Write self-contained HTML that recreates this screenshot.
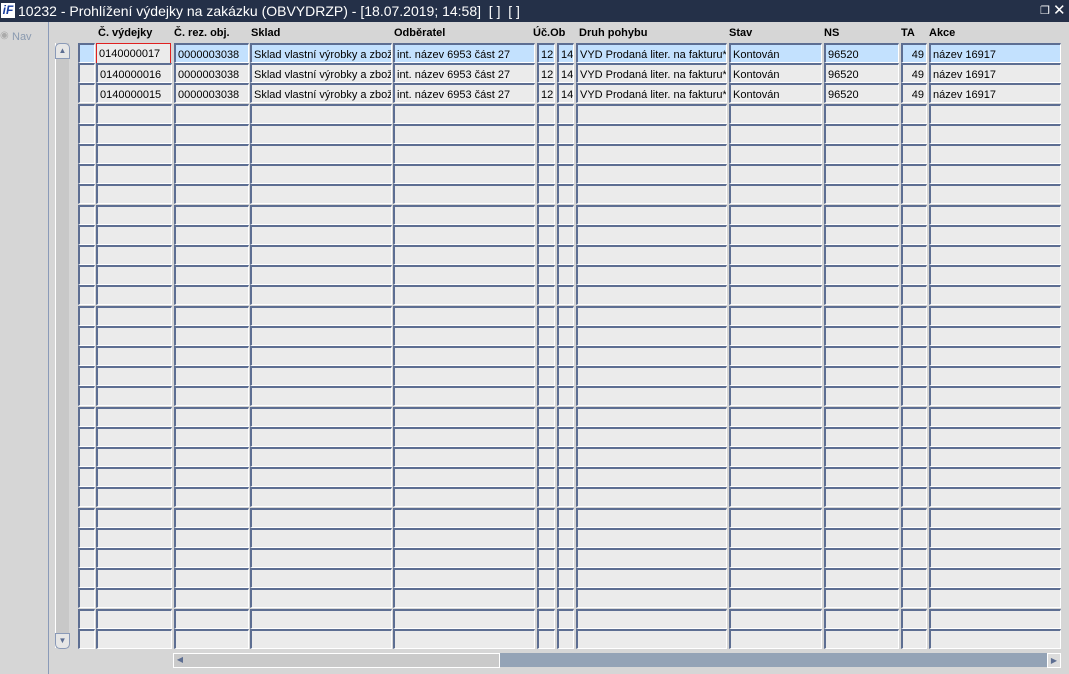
<!DOCTYPE html><html><head><meta charset="utf-8"><style>
body{margin:0;width:1069px;height:674px;overflow:hidden;background:#d6d6d6;font-family:"Liberation Sans",Arial,sans-serif;position:relative}
.t{position:absolute;left:0;top:0;width:1069px;height:22px;background:#243048;color:#fff;font-size:14px;line-height:22px}
.a{position:absolute}
.c{position:absolute;height:17px;background:#ebebeb;border-top:2px solid #5d6e92;border-left:2px solid #5d6e92;border-right:1px solid #fff;border-bottom:1px solid #fff;font-size:11px;line-height:20px;padding-left:2px;box-sizing:content-box;white-space:nowrap;overflow:hidden;color:#000}
.s{background:#c3e1fe}
.h{position:absolute;top:27px;font-size:11px;font-weight:bold}
</style></head><body>
<div class="t"><span style="position:absolute;left:1px;top:3px;width:14px;height:15px;background:#fff;color:#1a3fa0;font-weight:bold;font-style:italic;font-size:12px;line-height:15px;text-align:center">iF</span><span style="position:absolute;left:18px">10232 - Prohlížení výdejky na zakázku (OBVYDRZP) - [18.07.2019; 14:58]&nbsp; [ ]&nbsp; [ ]</span>
<span style="position:absolute;left:1040px;top:0;font-size:11px">&#x2750;</span><span style="position:absolute;left:1053px;top:0;font-size:15px">✕</span></div>
<div class="a" style="left:0;top:30px;width:13px;height:13px;font-size:10px;color:#aaa">◉</div>
<div class="a" style="left:12px;top:31px;font-size:11px;color:#8a9ab0">Nav</div>
<div class="a" style="left:48px;top:22px;width:1px;height:652px;background:#8a9ab8"></div>
<div class="a" style="left:55px;top:43px;width:1px;height:605px;background:#fff"></div>
<div class="a" style="left:56px;top:43px;width:13px;height:605px;background:#c8c8c8"></div>
<div class="a" style="left:55px;top:43px;width:13px;height:14px;background:#e6e6e6;border:1px solid #8a9ab8;border-radius:5px 5px 0 0;font-size:8px;color:#5d6e92;text-align:center;line-height:14px">▲</div>
<div class="a" style="left:55px;top:633px;width:13px;height:14px;background:#e6e6e6;border:1px solid #8a9ab8;border-radius:0 0 5px 5px;font-size:8px;color:#5d6e92;text-align:center;line-height:14px">▼</div>
<div class="a" style="left:173px;top:653px;width:888px;height:14px;background:#94a3b6"></div>
<div class="a" style="left:173px;top:653px;width:325px;height:13px;background:#cacaca;border:1px solid #fff"></div>
<div class="a" style="left:1047px;top:653px;width:12px;height:13px;background:#dcdcdc;border:1px solid #fff;font-size:8px;color:#5d6e92;line-height:13px;text-align:center">▶</div>
<div class="a" style="left:174px;top:653px;width:12px;height:13px;font-size:8px;color:#5d6e92;line-height:13px;text-align:center">◀</div>
<div class="h" style="left:98px">Č. výdejky</div><div class="h" style="left:174px">Č. rez. obj.</div><div class="h" style="left:251px">Sklad</div><div class="h" style="left:394px">Odběratel</div><div class="h" style="left:533px">Úč.Ob</div><div class="h" style="left:579px">Druh pohybu</div><div class="h" style="left:729px">Stav</div><div class="h" style="left:824px">NS</div><div class="h" style="left:901px">TA</div><div class="h" style="left:929px">Akce</div>
<div id="g"></div>
<script>
var cols=[[78,17],[96,76],[174,75],[250,142],[393,142],[537,18],[557,17],[576,151],[729,93],[824,75],[901,26],[929,132]];
var d=["","01400000","0000003038","Sklad vlastní výrobky a zbož","int. název 6953 část 27","12","14","VYD Prodaná liter. na fakturu*","Kontován","96520","49","název 16917"];
var h="";
for(var r=0;r<30;r++){var y=Math.round(43+r*20.2);
for(var i=0;i<cols.length;i++){var t="";if(r<3){t=d[i];if(i==1)t="01400000"+(17-r);}
var st="left:"+cols[i][0]+"px;top:"+y+"px;width:"+(cols[i][1]-5)+"px;";
if(i==10)st+="text-align:right;padding-right:2px;width:"+(cols[i][1]-7)+"px;";
if(r==0&&i==1)st+="border:1px solid #e02020;height:19px;line-height:21px;background:#ebebeb;";
h+='<div class="c'+(r==0?' s':'')+'" style="'+st+'">'+t+'</div>';}}
document.getElementById("g").innerHTML=h;
</script>
</body></html>
